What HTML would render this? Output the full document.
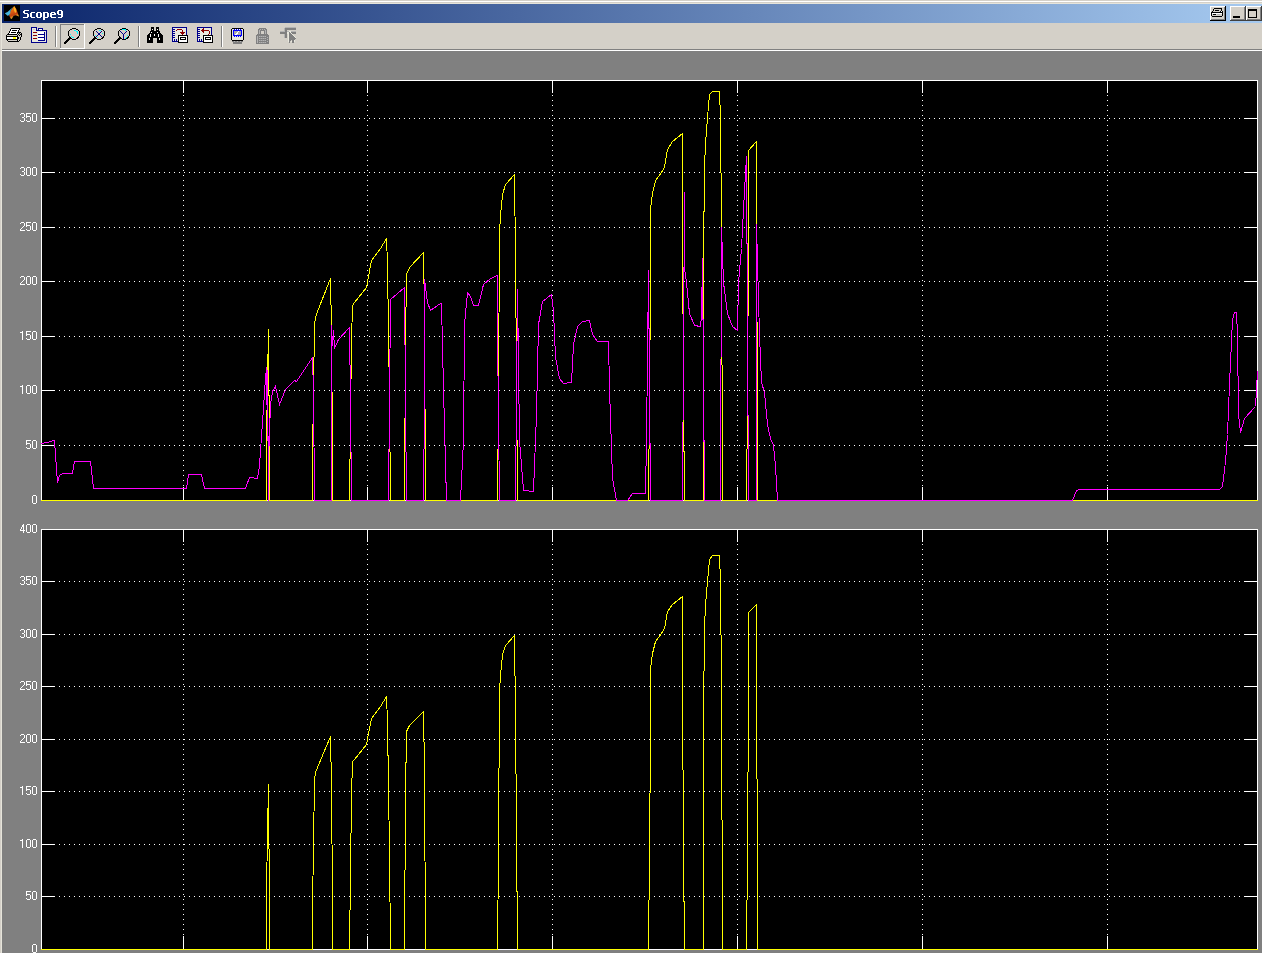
<!DOCTYPE html>
<html><head><meta charset="utf-8"><style>
html,body{margin:0;padding:0;}
body{width:1262px;height:953px;overflow:hidden;background:#d4d0c8;position:relative;font-family:"Liberation Sans",sans-serif;}
svg{position:absolute;left:0;top:0;}
.lb{font-size:12px;fill:#fff;text-anchor:end;letter-spacing:-0.5px;font-family:"Liberation Sans",sans-serif;}
</style></head><body>
<svg width="1262" height="953" shape-rendering="crispEdges">
<rect x="0" y="1" width="1262" height="1" fill="#fff"/>
<rect x="1" y="3" width="1" height="950" fill="#e6e4da"/>
<rect x="1" y="3" width="1261" height="1" fill="#e6e4da"/>
<defs><linearGradient id="tg" x1="0" x2="1" y1="0" y2="0"><stop offset="0" stop-color="#0a246a"/><stop offset="1" stop-color="#a6caf0"/></linearGradient></defs>
<rect x="2" y="4" width="1260" height="19" fill="url(#tg)"/>
<rect x="4" y="5" width="16" height="16" fill="#000"/>
<g shape-rendering="auto"><defs><linearGradient id="lg" x1="0" y1="0" x2="0.3" y2="1"><stop offset="0" stop-color="#ffb020"/><stop offset="0.45" stop-color="#e06010"/><stop offset="0.75" stop-color="#c04010"/><stop offset="1" stop-color="#ffd030"/></linearGradient></defs><path d="M14.3 6 L16.5 9.5 L17.8 13.3 L19 16.5 L15.8 15.2 L13.6 15.8 L12 18.4 L11 19 L9.2 15.8 L9.5 12.7 L10.8 10.5 L13.3 7 Z" fill="url(#lg)"/><path d="M14.3 6.2 L15.8 9 L16.3 12 L15 13 L14 10 Z" fill="#ffcc30" opacity="0.8"/><path d="M4.8 13.3 L7.5 12 L9.2 10.5 L13 7.2 L10.5 10.8 L10.2 13.5 L9 15.2 L7.5 15.8 Z" fill="#48b4dc"/></g>
<path fill="#fff" d="M24 10h5v1h-5zM23 11h2v1h-2zM23 12h2v1h-2zM24 13h4v1h-4zM27 14h2v1h-2zM27 15h2v1h-2zM27 16h2v1h-2zM23 17h5v1h-5zM31 12h4v1h-4zM30 13h2v1h-2zM30 14h2v1h-2zM30 15h2v1h-2zM30 16h2v1h-2zM31 17h4v1h-4zM37 12h4v1h-4zM36 13h2v1h-2zM40 13h2v1h-2zM36 14h2v1h-2zM40 14h2v1h-2zM36 15h2v1h-2zM40 15h2v1h-2zM36 16h2v1h-2zM40 16h2v1h-2zM37 17h4v1h-4zM43 12h5v1h-5zM43 13h2v1h-2zM47 13h2v1h-2zM43 14h2v1h-2zM47 14h2v1h-2zM43 15h2v1h-2zM47 15h2v1h-2zM43 16h2v1h-2zM47 16h2v1h-2zM43 17h5v1h-5zM43 18h2v1h-2zM43 19h2v1h-2zM51 12h4v1h-4zM50 13h2v1h-2zM54 13h2v1h-2zM50 14h6v1h-6zM50 15h2v1h-2zM50 16h2v1h-2zM51 17h5v1h-5zM58 10h4v1h-4zM57 11h2v1h-2zM61 11h2v1h-2zM57 12h2v1h-2zM61 12h2v1h-2zM57 13h2v1h-2zM61 13h2v1h-2zM58 14h5v1h-5zM61 15h2v1h-2zM61 16h2v1h-2zM58 17h4v1h-4z"/>
<rect x="1210" y="6" width="16" height="15" fill="#d4d0c8"/><rect x="1210" y="6" width="15" height="1" fill="#fff"/><rect x="1210" y="6" width="1" height="14" fill="#fff"/><rect x="1210" y="20" width="16" height="1" fill="#000"/><rect x="1225" y="6" width="1" height="15" fill="#000"/><rect x="1211" y="19" width="14" height="1" fill="#808080"/><rect x="1224" y="7" width="1" height="13" fill="#808080"/>
<path fill="#000" d="M1214 8h8v1h-8zM1213 9h1v1h-1zM1221 9h1v1h-1zM1213 10h1v1h-1zM1215 10h4v1h-4zM1221 10h1v1h-1zM1212 11h1v1h-1zM1220 11h1v1h-1zM1222 11h1v1h-1zM1211 12h12v1h-12zM1211 13h1v1h-1zM1222 13h1v1h-1zM1211 14h1v1h-1zM1213 14h3v1h-3zM1222 14h1v1h-1zM1211 15h1v1h-1zM1222 15h1v1h-1zM1212 16h10v1h-10z"/><path fill="#d4d0c8" d="M1214 9h7v1h-7zM1214 10h1v1h-1zM1219 10h2v1h-2zM1213 11h7v1h-7zM1212 14h1v1h-1zM1216 14h1v1h-1zM1220 14h2v1h-2zM1212 15h10v1h-10z"/><path fill="#fff" d="M1221 11h1v1h-1zM1212 13h10v1h-10z"/><path fill="#b4b4b4" d="M1217 14h3v1h-3z"/>
<rect x="1230" y="6" width="16" height="15" fill="#d4d0c8"/><rect x="1230" y="6" width="15" height="1" fill="#fff"/><rect x="1230" y="6" width="1" height="14" fill="#fff"/><rect x="1230" y="20" width="16" height="1" fill="#404040"/><rect x="1245" y="6" width="1" height="15" fill="#404040"/><rect x="1231" y="19" width="14" height="1" fill="#808080"/><rect x="1244" y="7" width="1" height="13" fill="#808080"/>
<rect x="1233" y="16" width="7" height="2" fill="#000"/>
<rect x="1246" y="6" width="16" height="15" fill="#d4d0c8"/><rect x="1246" y="6" width="15" height="1" fill="#fff"/><rect x="1246" y="6" width="1" height="14" fill="#fff"/><rect x="1246" y="20" width="16" height="1" fill="#404040"/><rect x="1261" y="6" width="1" height="15" fill="#404040"/><rect x="1247" y="19" width="14" height="1" fill="#808080"/><rect x="1260" y="7" width="1" height="13" fill="#808080"/>
<rect x="1248" y="9" width="9" height="9" fill="#000"/><rect x="1249" y="11" width="7" height="6" fill="#d4d0c8"/>
<rect x="2" y="49" width="1260" height="1" fill="#808080"/>
<rect x="2" y="50" width="1260" height="1" fill="#fff"/>
<rect x="55" y="26" width="1" height="21" fill="#808080"/><rect x="56" y="26" width="1" height="21" fill="#fff"/>
<rect x="138" y="26" width="1" height="21" fill="#808080"/><rect x="139" y="26" width="1" height="21" fill="#fff"/>
<rect x="221" y="26" width="1" height="21" fill="#808080"/><rect x="222" y="26" width="1" height="21" fill="#fff"/>
<rect x="60" y="24" width="25" height="1" fill="#808080"/><rect x="60" y="24" width="1" height="24" fill="#808080"/><rect x="60" y="48" width="25" height="1" fill="#fff"/><rect x="84" y="24" width="1" height="25" fill="#fff"/>
<path fill="#000" d="M11 28h9v1h-9zM10 29h1v1h-1zM19 29h1v1h-1zM10 30h1v1h-1zM12 30h5v1h-5zM18 30h1v1h-1zM9 31h1v1h-1zM18 31h1v1h-1zM9 32h1v1h-1zM11 32h5v1h-5zM17 32h4v1h-4zM8 33h1v1h-1zM17 33h1v1h-1zM19 33h1v1h-1zM21 33h1v1h-1zM7 34h10v1h-10zM18 34h1v1h-1zM20 34h2v1h-2zM6 35h1v1h-1zM17 35h1v1h-1zM19 35h1v1h-1zM21 35h1v1h-1zM6 36h12v1h-12zM21 36h1v1h-1zM6 37h1v1h-1zM17 37h2v1h-2zM20 37h1v1h-1zM6 38h1v1h-1zM17 38h2v1h-2zM20 38h1v1h-1zM6 39h12v1h-12zM20 39h1v1h-1zM7 40h1v1h-1zM17 40h1v1h-1zM19 40h1v1h-1zM8 41h11v1h-11z"/><path fill="#fff" d="M11 29h8v1h-8zM11 30h1v1h-1zM17 30h1v1h-1zM10 31h8v1h-8zM10 32h1v1h-1zM16 32h1v1h-1zM9 33h8v1h-8zM7 37h6v1h-6zM16 37h1v1h-1zM7 38h6v1h-6zM16 38h1v1h-1z"/><path fill="#d4d0c8" d="M18 33h1v1h-1zM20 33h1v1h-1zM17 34h1v1h-1zM19 34h1v1h-1zM7 35h10v1h-10zM18 35h1v1h-1zM20 35h1v1h-1zM18 36h3v1h-3zM19 37h1v1h-1zM19 38h1v1h-1zM18 39h2v1h-2zM8 40h9v1h-9zM18 40h1v1h-1z"/><path fill="#ffff00" d="M13 37h3v1h-3zM13 38h3v1h-3z"/><path fill="#00008b" d="M31 27h6v1h-6zM31 28h1v1h-1zM36 28h1v1h-1zM38 28h5v1h-5zM31 29h1v1h-1zM36 29h1v1h-1zM38 29h1v1h-1zM42 29h1v1h-1zM31 30h1v1h-1zM36 30h11v1h-11zM31 31h1v1h-1zM46 31h1v1h-1zM31 32h1v1h-1zM44 32h1v1h-1zM46 32h1v1h-1zM31 33h1v1h-1zM44 33h1v1h-1zM46 33h1v1h-1zM31 34h1v1h-1zM38 34h7v1h-7zM46 34h1v1h-1zM31 35h1v1h-1zM44 35h1v1h-1zM46 35h1v1h-1zM31 36h1v1h-1zM44 36h1v1h-1zM46 36h1v1h-1zM31 37h1v1h-1zM38 37h7v1h-7zM46 37h1v1h-1zM31 38h1v1h-1zM44 38h1v1h-1zM46 38h1v1h-1zM31 39h1v1h-1zM44 39h1v1h-1zM46 39h1v1h-1zM31 40h1v1h-1zM38 40h7v1h-7zM46 40h1v1h-1zM31 41h1v1h-1zM46 41h1v1h-1zM31 42h16v1h-16z"/><path fill="#e9e9df" d="M32 28h4v1h-4zM32 29h1v1h-1zM35 29h1v1h-1zM32 30h4v1h-4zM32 31h14v1h-14zM32 32h1v1h-1zM37 32h1v1h-1zM45 32h1v1h-1zM32 33h6v1h-6zM45 33h1v1h-1zM32 34h6v1h-6zM45 34h1v1h-1zM32 35h1v1h-1zM37 35h1v1h-1zM45 35h1v1h-1zM32 36h6v1h-6zM45 36h1v1h-1zM32 37h6v1h-6zM45 37h1v1h-1zM32 38h1v1h-1zM37 38h1v1h-1zM45 38h1v1h-1zM32 39h6v1h-6zM45 39h1v1h-1zM32 40h6v1h-6zM45 40h1v1h-1zM32 41h14v1h-14z"/><path fill="#d4d0c8" d="M33 29h2v1h-2z"/><path fill="#fff" d="M39 29h3v1h-3zM38 32h6v1h-6zM38 33h6v1h-6zM38 35h6v1h-6zM38 36h6v1h-6zM38 38h6v1h-6zM38 39h6v1h-6z"/><path fill="#8b0000" d="M33 32h4v1h-4zM33 35h4v1h-4zM33 38h4v1h-4z"/><path fill="#000" d="M72 28h4v1h-4zM70 29h2v1h-2zM76 29h2v1h-2zM69 30h1v1h-1zM78 30h1v1h-1zM68 31h1v1h-1zM79 31h1v1h-1zM68 32h1v1h-1zM79 32h1v1h-1zM68 33h1v1h-1zM79 33h1v1h-1zM68 34h1v1h-1zM79 34h1v1h-1zM68 35h1v1h-1zM79 35h1v1h-1zM69 36h1v1h-1zM78 36h1v1h-1zM69 37h2v1h-2zM77 37h2v1h-2zM68 38h4v1h-4zM76 38h2v1h-2zM67 39h3v1h-3zM72 39h4v1h-4zM66 40h3v1h-3zM65 41h3v1h-3zM64 42h3v1h-3zM64 43h2v1h-2z"/><path fill="#00ffff" d="M74 30h2v1h-2zM76 31h2v1h-2zM77 32h1v1h-1zM77 33h1v1h-1zM70 34h1v1h-1zM71 36h1v1h-1zM72 37h2v1h-2z"/><path fill="#000" d="M97 28h4v1h-4zM95 29h2v1h-2zM101 29h2v1h-2zM94 30h1v1h-1zM103 30h1v1h-1zM93 31h1v1h-1zM104 31h1v1h-1zM93 32h1v1h-1zM104 32h1v1h-1zM93 33h1v1h-1zM104 33h1v1h-1zM93 34h1v1h-1zM104 34h1v1h-1zM93 35h1v1h-1zM104 35h1v1h-1zM94 36h1v1h-1zM103 36h1v1h-1zM94 37h2v1h-2zM102 37h2v1h-2zM93 38h4v1h-4zM101 38h2v1h-2zM92 39h3v1h-3zM97 39h4v1h-4zM91 40h3v1h-3zM90 41h3v1h-3zM89 42h3v1h-3zM89 43h2v1h-2z"/><path fill="#00ffff" d="M99 30h2v1h-2zM102 33h1v1h-1zM95 35h1v1h-1zM97 37h1v1h-1z"/><path fill="#00008b" d="M96 31h1v1h-1zM101 31h1v1h-1zM97 32h1v1h-1zM100 32h1v1h-1zM98 33h2v1h-2zM98 34h2v1h-2zM97 35h1v1h-1zM100 35h1v1h-1zM96 36h1v1h-1zM101 36h1v1h-1z"/><path fill="#000" d="M122 28h4v1h-4zM120 29h2v1h-2zM126 29h2v1h-2zM119 30h1v1h-1zM128 30h1v1h-1zM118 31h1v1h-1zM129 31h1v1h-1zM118 32h1v1h-1zM129 32h1v1h-1zM118 33h1v1h-1zM129 33h1v1h-1zM118 34h1v1h-1zM129 34h1v1h-1zM118 35h1v1h-1zM129 35h1v1h-1zM119 36h1v1h-1zM128 36h1v1h-1zM119 37h2v1h-2zM127 37h2v1h-2zM118 38h4v1h-4zM126 38h2v1h-2zM117 39h3v1h-3zM122 39h4v1h-4zM116 40h3v1h-3zM115 41h3v1h-3zM114 42h3v1h-3zM114 43h2v1h-2z"/><path fill="#00ffff" d="M122 29h4v1h-4zM125 30h1v1h-1zM127 35h1v1h-1zM126 37h1v1h-1zM125 38h1v1h-1z"/><path fill="#00008b" d="M120 31h1v1h-1zM126 31h1v1h-1zM121 32h1v1h-1zM125 32h1v1h-1zM122 33h1v1h-1zM124 33h1v1h-1zM123 34h1v1h-1zM123 35h1v1h-1zM123 36h1v1h-1zM123 37h1v1h-1zM123 38h1v1h-1z"/><path fill="#000" d="M151 27h3v1h-3zM156 27h3v1h-3zM151 28h3v1h-3zM156 28h3v1h-3zM151 29h1v1h-1zM153 29h1v1h-1zM156 29h1v1h-1zM158 29h1v1h-1zM151 30h3v1h-3zM156 30h3v1h-3zM150 31h10v1h-10zM150 32h1v1h-1zM152 32h5v1h-5zM158 32h2v1h-2zM149 33h12v1h-12zM148 34h2v1h-2zM151 34h3v1h-3zM155 34h3v1h-3zM159 34h3v1h-3zM147 35h3v1h-3zM151 35h3v1h-3zM155 35h3v1h-3zM159 35h4v1h-4zM147 36h3v1h-3zM151 36h7v1h-7zM159 36h4v1h-4zM147 37h16v1h-16zM147 38h2v1h-2zM150 38h3v1h-3zM157 38h2v1h-2zM160 38h3v1h-3zM147 39h2v1h-2zM150 39h3v1h-3zM157 39h2v1h-2zM160 39h3v1h-3zM147 40h6v1h-6zM157 40h6v1h-6zM147 41h6v1h-6zM157 41h6v1h-6zM147 42h6v1h-6zM157 42h6v1h-6z"/><path fill="#fff" d="M152 29h1v1h-1zM157 29h1v1h-1zM151 32h1v1h-1zM157 32h1v1h-1zM150 34h1v1h-1zM154 34h1v1h-1zM158 34h1v1h-1zM150 35h1v1h-1zM154 35h1v1h-1zM158 35h1v1h-1zM150 36h1v1h-1zM158 36h1v1h-1zM149 38h1v1h-1zM159 38h1v1h-1zM149 39h1v1h-1zM159 39h1v1h-1z"/><path fill="#00008b" d="M172 27h15v1h-15zM172 28h1v1h-1zM186 28h1v1h-1zM172 29h3v1h-3zM186 29h1v1h-1zM172 30h1v1h-1zM186 30h1v1h-1zM172 31h3v1h-3zM186 31h1v1h-1zM172 32h1v1h-1zM186 32h1v1h-1zM172 33h3v1h-3zM186 33h1v1h-1zM172 34h1v1h-1zM186 34h1v1h-1zM172 35h3v1h-3zM172 36h1v1h-1zM172 37h3v1h-3zM172 38h1v1h-1zM172 39h1v1h-1zM174 39h1v1h-1zM176 39h1v1h-1zM172 40h1v1h-1zM174 40h1v1h-1zM176 40h1v1h-1zM172 41h6v1h-6z"/><path fill="#e9e9df" d="M173 28h13v1h-13zM175 29h2v1h-2zM182 29h4v1h-4zM173 30h3v1h-3zM177 30h5v1h-5zM183 30h3v1h-3zM175 31h7v1h-7zM183 31h3v1h-3zM173 32h7v1h-7zM185 32h1v1h-1zM175 33h6v1h-6zM184 33h2v1h-2zM173 34h9v1h-9zM183 34h3v1h-3zM175 35h3v1h-3zM173 36h5v1h-5zM175 37h3v1h-3zM173 38h5v1h-5zM173 39h1v1h-1zM175 39h1v1h-1zM177 39h1v1h-1zM173 40h1v1h-1zM175 40h1v1h-1zM177 40h1v1h-1z"/><path fill="#8b0000" d="M177 29h5v1h-5zM176 30h1v1h-1zM182 30h1v1h-1zM182 31h1v1h-1zM180 32h5v1h-5zM181 33h3v1h-3zM182 34h1v1h-1z"/><path fill="#000" d="M178 35h10v1h-10zM178 36h1v1h-1zM187 36h1v1h-1zM178 37h1v1h-1zM180 37h6v1h-6zM187 37h1v1h-1zM178 38h1v1h-1zM180 38h1v1h-1zM185 38h1v1h-1zM187 38h1v1h-1zM178 39h1v1h-1zM180 39h6v1h-6zM187 39h1v1h-1zM178 40h1v1h-1zM187 40h1v1h-1zM178 41h1v1h-1zM187 41h1v1h-1zM178 42h10v1h-10z"/><path fill="#fff" d="M179 36h8v1h-8zM179 37h1v1h-1zM186 37h1v1h-1zM179 38h1v1h-1zM181 38h4v1h-4zM186 38h1v1h-1zM179 39h1v1h-1zM186 39h1v1h-1zM179 40h8v1h-8zM179 41h8v1h-8z"/><path fill="#00008b" d="M197 27h15v1h-15zM197 28h1v1h-1zM211 28h1v1h-1zM197 29h3v1h-3zM211 29h1v1h-1zM197 30h1v1h-1zM211 30h1v1h-1zM197 31h3v1h-3zM211 31h1v1h-1zM197 32h1v1h-1zM211 32h1v1h-1zM197 33h3v1h-3zM211 33h1v1h-1zM197 34h1v1h-1zM211 34h1v1h-1zM197 35h3v1h-3zM197 36h1v1h-1zM197 37h3v1h-3zM197 38h1v1h-1zM197 39h1v1h-1zM199 39h1v1h-1zM201 39h1v1h-1zM197 40h1v1h-1zM199 40h1v1h-1zM201 40h1v1h-1zM197 41h6v1h-6z"/><path fill="#e9e9df" d="M198 28h5v1h-5zM204 28h7v1h-7zM200 29h2v1h-2zM204 29h7v1h-7zM198 30h3v1h-3zM209 30h2v1h-2zM200 31h2v1h-2zM204 31h5v1h-5zM210 31h1v1h-1zM198 32h5v1h-5zM204 32h5v1h-5zM210 32h1v1h-1zM200 33h9v1h-9zM210 33h1v1h-1zM198 34h10v1h-10zM209 34h2v1h-2zM200 35h3v1h-3zM198 36h5v1h-5zM200 37h3v1h-3zM198 38h5v1h-5zM198 39h1v1h-1zM200 39h1v1h-1zM202 39h1v1h-1zM198 40h1v1h-1zM200 40h1v1h-1zM202 40h1v1h-1z"/><path fill="#8b0000" d="M203 28h1v1h-1zM202 29h2v1h-2zM201 30h8v1h-8zM202 31h2v1h-2zM209 31h1v1h-1zM203 32h1v1h-1zM209 32h1v1h-1zM209 33h1v1h-1zM208 34h1v1h-1z"/><path fill="#000" d="M203 35h10v1h-10zM203 36h1v1h-1zM212 36h1v1h-1zM203 37h1v1h-1zM205 37h6v1h-6zM212 37h1v1h-1zM203 38h1v1h-1zM205 38h1v1h-1zM210 38h1v1h-1zM212 38h1v1h-1zM203 39h1v1h-1zM205 39h6v1h-6zM212 39h1v1h-1zM203 40h1v1h-1zM212 40h1v1h-1zM203 41h1v1h-1zM212 41h1v1h-1zM203 42h10v1h-10z"/><path fill="#fff" d="M204 36h8v1h-8zM204 37h1v1h-1zM211 37h1v1h-1zM204 38h1v1h-1zM206 38h4v1h-4zM211 38h1v1h-1zM204 39h1v1h-1zM211 39h1v1h-1zM204 40h8v1h-8zM204 41h8v1h-8z"/><path fill="#000" d="M232 28h11v1h-11zM231 29h1v1h-1zM243 29h1v1h-1zM231 30h1v1h-1zM243 30h1v1h-1zM231 31h1v1h-1zM243 31h1v1h-1zM231 32h1v1h-1zM243 32h1v1h-1zM231 33h1v1h-1zM243 33h1v1h-1zM231 34h1v1h-1zM243 34h1v1h-1zM231 35h1v1h-1zM243 35h1v1h-1zM231 36h1v1h-1zM243 36h1v1h-1zM231 37h1v1h-1zM243 37h1v1h-1zM231 38h1v1h-1zM243 38h1v1h-1zM231 39h1v1h-1zM243 39h1v1h-1zM232 40h11v1h-11z"/><path fill="#e9e9df" d="M232 29h2v1h-2zM241 29h2v1h-2zM232 30h1v1h-1zM242 30h1v1h-1zM232 31h1v1h-1zM242 31h1v1h-1zM232 32h1v1h-1zM242 32h1v1h-1zM232 33h1v1h-1zM242 33h1v1h-1zM232 34h1v1h-1zM242 34h1v1h-1zM232 35h1v1h-1zM242 35h1v1h-1zM232 36h2v1h-2zM235 36h1v1h-1zM237 36h1v1h-1zM239 36h1v1h-1zM241 36h2v1h-2zM232 37h11v1h-11zM232 38h11v1h-11zM232 39h11v1h-11z"/><path fill="#0000ff" d="M234 29h1v1h-1zM236 29h1v1h-1zM238 29h1v1h-1zM240 29h1v1h-1zM233 30h9v1h-9zM233 31h1v1h-1zM241 31h1v1h-1zM233 32h1v1h-1zM241 32h1v1h-1zM233 33h1v1h-1zM241 33h1v1h-1zM233 34h1v1h-1zM241 34h1v1h-1zM233 35h9v1h-9zM234 36h1v1h-1zM236 36h1v1h-1zM238 36h1v1h-1zM240 36h1v1h-1z"/><path fill="#fff" d="M235 29h1v1h-1zM237 29h1v1h-1zM239 29h1v1h-1zM238 31h1v1h-1zM237 32h1v1h-1zM236 33h2v1h-2zM235 34h2v1h-2z"/><path fill="#a8a8a8" d="M234 31h4v1h-4zM239 31h2v1h-2zM234 32h3v1h-3zM238 32h3v1h-3zM234 33h2v1h-2zM238 33h3v1h-3zM234 34h1v1h-1zM237 34h4v1h-4z"/><path fill="#808080" d="M232 41h2v1h-2zM235 41h2v1h-2zM238 41h2v1h-2zM241 41h2v1h-2zM233 42h9v1h-9zM233 43h9v1h-9z"/><path fill="#b4b4b4" d="M234 41h1v1h-1zM237 41h1v1h-1zM240 41h1v1h-1z"/><path fill="#808080" d="M259 28h7v1h-7zM258 29h2v1h-2zM261 29h1v1h-1zM263 29h1v1h-1zM265 29h2v1h-2zM258 30h1v1h-1zM260 30h5v1h-5zM266 30h1v1h-1zM258 31h1v1h-1zM260 31h1v1h-1zM264 31h1v1h-1zM266 31h1v1h-1zM258 32h1v1h-1zM260 32h1v1h-1zM264 32h1v1h-1zM266 32h1v1h-1zM258 33h1v1h-1zM260 33h1v1h-1zM264 33h1v1h-1zM266 33h1v1h-1zM257 34h11v1h-11zM256 35h13v1h-13zM256 36h1v1h-1zM258 36h1v1h-1zM266 36h3v1h-3zM256 37h1v1h-1zM258 37h9v1h-9zM268 37h1v1h-1zM256 38h1v1h-1zM258 38h1v1h-1zM266 38h3v1h-3zM256 39h1v1h-1zM258 39h9v1h-9zM268 39h1v1h-1zM256 40h1v1h-1zM258 40h1v1h-1zM266 40h3v1h-3zM256 41h1v1h-1zM258 41h9v1h-9zM268 41h1v1h-1zM256 42h1v1h-1zM258 42h1v1h-1zM266 42h3v1h-3zM256 43h13v1h-13z"/><path fill="#b4b4b4" d="M260 29h1v1h-1zM262 29h1v1h-1zM264 29h1v1h-1zM259 30h1v1h-1zM265 30h1v1h-1zM259 31h1v1h-1zM265 31h1v1h-1zM259 32h1v1h-1zM265 32h1v1h-1zM259 33h1v1h-1zM265 33h1v1h-1zM257 36h1v1h-1zM259 36h1v1h-1zM261 36h1v1h-1zM263 36h1v1h-1zM265 36h1v1h-1zM257 37h1v1h-1zM267 37h1v1h-1zM257 38h1v1h-1zM259 38h1v1h-1zM261 38h1v1h-1zM263 38h1v1h-1zM265 38h1v1h-1zM257 39h1v1h-1zM267 39h1v1h-1zM257 40h1v1h-1zM259 40h1v1h-1zM261 40h1v1h-1zM263 40h1v1h-1zM265 40h1v1h-1zM257 41h1v1h-1zM267 41h1v1h-1zM257 42h1v1h-1zM259 42h1v1h-1zM261 42h1v1h-1zM263 42h1v1h-1zM265 42h1v1h-1z"/><path fill="#d4d0c8" d="M261 31h3v1h-3zM261 32h3v1h-3zM261 33h3v1h-3z"/><path fill="#9c9c9c" d="M260 36h1v1h-1zM262 36h1v1h-1zM264 36h1v1h-1zM260 38h1v1h-1zM262 38h1v1h-1zM264 38h1v1h-1zM260 40h1v1h-1zM262 40h1v1h-1zM264 40h1v1h-1zM260 42h1v1h-1zM262 42h1v1h-1zM264 42h1v1h-1z"/><path fill="#b4b4b4" d="M285 27h11v1h-11zM284 28h1v1h-1zM284 29h1v1h-1zM284 30h1v1h-1zM280 31h5v1h-5zM287 31h2v1h-2zM291 31h5v1h-5zM284 34h1v1h-1zM284 35h1v1h-1zM284 36h1v1h-1zM284 37h1v1h-1z"/><path fill="#808080" d="M285 28h11v1h-11zM285 29h11v1h-11zM285 30h2v1h-2zM285 31h2v1h-2zM280 32h7v1h-7zM289 32h1v1h-1zM291 32h5v1h-5zM280 33h7v1h-7zM289 33h2v1h-2zM292 33h4v1h-4zM285 34h2v1h-2zM289 34h3v1h-3zM285 35h2v1h-2zM289 35h4v1h-4zM285 36h2v1h-2zM289 36h5v1h-5zM285 37h2v1h-2zM289 37h6v1h-6zM289 38h7v1h-7zM289 39h6v1h-6zM289 40h2v1h-2zM292 40h2v1h-2zM289 41h1v1h-1zM292 41h2v1h-2zM289 42h1v1h-1zM292 42h2v1h-2z"/><path fill="#e9e9df" d="M289 31h2v1h-2zM287 32h2v1h-2zM290 32h1v1h-1zM287 33h2v1h-2zM291 33h1v1h-1zM288 34h1v1h-1zM292 34h1v1h-1zM288 35h1v1h-1zM293 35h1v1h-1zM288 36h1v1h-1zM294 36h1v1h-1zM288 37h1v1h-1zM295 37h1v1h-1zM288 38h1v1h-1zM288 39h1v1h-1zM288 40h1v1h-1zM294 40h1v1h-1zM288 41h1v1h-1zM291 41h1v1h-1zM294 41h1v1h-1z"/>
<rect x="2" y="51" width="1260" height="902" fill="#808080"/>
<rect x="41" y="80" width="1217" height="421" fill="#000"/>
<path d="M59 118.5H1243 M59 172.5H1243 M59 227.5H1243 M59 281.5H1243 M59 336.5H1243 M59 390.5H1243 M59 445.5H1243 M183.5 95V487 M367.5 95V487 M552.5 95V487 M737.5 95V487 M922.5 95V487 M1107.5 95V487" stroke="#fff" stroke-width="1" stroke-dasharray="1 4" fill="none"/>
<path d="M42 118.5h13M1244 118.5h13 M42 172.5h13M1244 172.5h13 M42 227.5h13M1244 227.5h13 M42 281.5h13M1244 281.5h13 M42 336.5h13M1244 336.5h13 M42 390.5h13M1244 390.5h13 M42 445.5h13M1244 445.5h13 M42 500.5h13M1244 500.5h13 M183.5 81v12M183.5 500v-13 M367.5 81v12M367.5 500v-13 M552.5 81v12M552.5 500v-13 M737.5 81v12M737.5 500v-13 M922.5 81v12M922.5 500v-13 M1107.5 81v12M1107.5 500v-13" stroke="#fff" stroke-width="1" fill="none"/>
<rect x="41.5" y="80.5" width="1216" height="420" fill="none" stroke="#fff" stroke-width="1"/>
<polyline points="41.5,500.5 266.5,500.5 266.5,440.5 267.5,380.5 268.5,329.5 269.5,460.5 269.5,500.5 312.5,500.5 312.5,457.5 313.5,392.5 314.5,324.5 315.5,317.5 317.5,311.5 330.5,278.5 331.5,330.5 332.5,450.5 332.5,500.5 349.5,500.5 350.5,420.5 351.5,340.5 352.5,305.5 354.5,302.5 366.5,287.5 368.5,276.5 371.5,260.5 374.5,256.5 380.5,248.5 386.5,238.5 387.5,263.5 389.5,400.5 390.5,500.5 404.5,500.5 405.5,340.5 406.5,274.5 409.5,267.5 423.5,252.5 424.5,314.5 425.5,500.5 497.5,500.5 498.5,400.5 499.5,232.5 500.5,215.5 502.5,194.5 505.5,184.5 514.5,174.5 515.5,255.5 517.5,500.5 648.5,500.5 649.5,400.5 650.5,280.5 650.5,209.5 652.5,193.5 655.5,180.5 661.5,172.5 664.5,167.5 667.5,149.5 672.5,141.5 682.5,133.5 682.5,224.5 683.5,400.5 684.5,500.5 703.5,500.5 703.5,258.5 704.5,166.5 705.5,143.5 707.5,117.5 709.5,94.5 712.5,91.5 719.5,91.5 720.5,117.5 721.5,226.5 722.5,500.5 746.5,500.5 747.5,400.5 748.5,237.5 748.5,150.5 756.5,141.5 757.5,500.5 1257.5,500.5" stroke="#ff0" fill="none" stroke-linecap="square"/>
<polyline points="41.5,443.5 47.5,442.5 53.5,440.5 54.5,440.5 57.5,482.5 59.5,475.5 62.5,473.5 72.5,473.5 74.5,461.5 90.5,461.5 93.5,488.5 186.5,488.5 188.5,474.5 201.5,474.5 204.5,488.5 245.5,488.5 249.5,477.5 257.5,478.5 259.5,465.5 261.5,436.5 263.5,408.5 264.5,391.5 266.5,367.5 267.5,440.5 267.5,370.5 268.5,500.5 268.5,460.5 270.5,404.5 272.5,391.5 275.5,386.5 279.5,404.5 285.5,389.5 294.5,380.5 296.5,381.5 312.5,357.5 313.5,391.5 314.5,500.5 331.5,500.5 331.5,325.5 332.5,345.5 333.5,330.5 334.5,348.5 338.5,339.5 349.5,327.5 350.5,400.5 351.5,500.5 388.5,500.5 389.5,400.5 390.5,299.5 404.5,287.5 405.5,400.5 406.5,500.5 423.5,500.5 424.5,400.5 424.5,279.5 427.5,302.5 430.5,310.5 440.5,303.5 441.5,303.5 443.5,388.5 446.5,500.5 460.5,500.5 463.5,440.5 464.5,324.5 467.5,292.5 470.5,296.5 473.5,305.5 478.5,305.5 483.5,284.5 490.5,278.5 497.5,275.5 497.5,332.5 499.5,500.5 515.5,500.5 517.5,289.5 519.5,440.5 523.5,490.5 533.5,491.5 536.5,414.5 538.5,324.5 542.5,301.5 551.5,294.5 553.5,311.5 555.5,357.5 559.5,378.5 563.5,383.5 571.5,382.5 573.5,344.5 577.5,326.5 582.5,321.5 589.5,320.5 592.5,334.5 597.5,341.5 608.5,341.5 609.5,388.5 612.5,478.5 616.5,500.5 627.5,500.5 632.5,493.5 645.5,493.5 646.5,440.5 648.5,270.5 650.5,500.5 682.5,500.5 684.5,192.5 684.5,268.5 686.5,282.5 689.5,313.5 694.5,325.5 700.5,326.5 701.5,316.5 702.5,258.5 704.5,500.5 720.5,500.5 721.5,227.5 723.5,282.5 727.5,313.5 732.5,326.5 737.5,330.5 738.5,282.5 741.5,248.5 744.5,190.5 746.5,156.5 748.5,500.5 756.5,500.5 756.5,224.5 758.5,299.5 759.5,334.5 761.5,382.5 764.5,392.5 767.5,424.5 770.5,438.5 773.5,445.5 775.5,466.5 777.5,500.5 1072.5,500.5 1076.5,490.5 1079.5,489.5 1219.5,489.5 1222.5,486.5 1225.5,461.5 1227.5,434.5 1229.5,384.5 1232.5,319.5 1234.5,312.5 1236.5,312.5 1237.5,335.5 1238.5,414.5 1240.5,432.5 1244.5,418.5 1255.5,406.5 1256.5,389.5 1257.5,371.5" stroke="#f0f" fill="none" stroke-linecap="square"/>
<path fill="#fff" d="M21 113h3v1h-3zM20 114h1v1h-1zM24 114h1v1h-1zM24 115h1v1h-1zM24 116h1v1h-1zM22 117h2v1h-2zM24 118h1v1h-1zM24 119h1v1h-1zM20 120h1v1h-1zM24 120h1v1h-1zM21 121h3v1h-3zM26 113h5v1h-5zM26 114h1v1h-1zM26 115h1v1h-1zM26 116h4v1h-4zM26 117h1v1h-1zM30 117h1v1h-1zM30 118h1v1h-1zM30 119h1v1h-1zM26 120h1v1h-1zM30 120h1v1h-1zM27 121h3v1h-3zM33 113h3v1h-3zM32 114h1v1h-1zM36 114h1v1h-1zM32 115h1v1h-1zM36 115h1v1h-1zM32 116h1v1h-1zM36 116h1v1h-1zM32 117h1v1h-1zM36 117h1v1h-1zM32 118h1v1h-1zM36 118h1v1h-1zM32 119h1v1h-1zM36 119h1v1h-1zM32 120h1v1h-1zM36 120h1v1h-1zM33 121h3v1h-3zM21 167h3v1h-3zM20 168h1v1h-1zM24 168h1v1h-1zM24 169h1v1h-1zM24 170h1v1h-1zM22 171h2v1h-2zM24 172h1v1h-1zM24 173h1v1h-1zM20 174h1v1h-1zM24 174h1v1h-1zM21 175h3v1h-3zM27 167h3v1h-3zM26 168h1v1h-1zM30 168h1v1h-1zM26 169h1v1h-1zM30 169h1v1h-1zM26 170h1v1h-1zM30 170h1v1h-1zM26 171h1v1h-1zM30 171h1v1h-1zM26 172h1v1h-1zM30 172h1v1h-1zM26 173h1v1h-1zM30 173h1v1h-1zM26 174h1v1h-1zM30 174h1v1h-1zM27 175h3v1h-3zM33 167h3v1h-3zM32 168h1v1h-1zM36 168h1v1h-1zM32 169h1v1h-1zM36 169h1v1h-1zM32 170h1v1h-1zM36 170h1v1h-1zM32 171h1v1h-1zM36 171h1v1h-1zM32 172h1v1h-1zM36 172h1v1h-1zM32 173h1v1h-1zM36 173h1v1h-1zM32 174h1v1h-1zM36 174h1v1h-1zM33 175h3v1h-3zM21 222h3v1h-3zM20 223h1v1h-1zM24 223h1v1h-1zM24 224h1v1h-1zM24 225h1v1h-1zM23 226h1v1h-1zM22 227h1v1h-1zM21 228h1v1h-1zM20 229h1v1h-1zM20 230h5v1h-5zM26 222h5v1h-5zM26 223h1v1h-1zM26 224h1v1h-1zM26 225h4v1h-4zM26 226h1v1h-1zM30 226h1v1h-1zM30 227h1v1h-1zM30 228h1v1h-1zM26 229h1v1h-1zM30 229h1v1h-1zM27 230h3v1h-3zM33 222h3v1h-3zM32 223h1v1h-1zM36 223h1v1h-1zM32 224h1v1h-1zM36 224h1v1h-1zM32 225h1v1h-1zM36 225h1v1h-1zM32 226h1v1h-1zM36 226h1v1h-1zM32 227h1v1h-1zM36 227h1v1h-1zM32 228h1v1h-1zM36 228h1v1h-1zM32 229h1v1h-1zM36 229h1v1h-1zM33 230h3v1h-3zM21 276h3v1h-3zM20 277h1v1h-1zM24 277h1v1h-1zM24 278h1v1h-1zM24 279h1v1h-1zM23 280h1v1h-1zM22 281h1v1h-1zM21 282h1v1h-1zM20 283h1v1h-1zM20 284h5v1h-5zM27 276h3v1h-3zM26 277h1v1h-1zM30 277h1v1h-1zM26 278h1v1h-1zM30 278h1v1h-1zM26 279h1v1h-1zM30 279h1v1h-1zM26 280h1v1h-1zM30 280h1v1h-1zM26 281h1v1h-1zM30 281h1v1h-1zM26 282h1v1h-1zM30 282h1v1h-1zM26 283h1v1h-1zM30 283h1v1h-1zM27 284h3v1h-3zM33 276h3v1h-3zM32 277h1v1h-1zM36 277h1v1h-1zM32 278h1v1h-1zM36 278h1v1h-1zM32 279h1v1h-1zM36 279h1v1h-1zM32 280h1v1h-1zM36 280h1v1h-1zM32 281h1v1h-1zM36 281h1v1h-1zM32 282h1v1h-1zM36 282h1v1h-1zM32 283h1v1h-1zM36 283h1v1h-1zM33 284h3v1h-3zM22 331h1v1h-1zM20 332h3v1h-3zM22 333h1v1h-1zM22 334h1v1h-1zM22 335h1v1h-1zM22 336h1v1h-1zM22 337h1v1h-1zM22 338h1v1h-1zM22 339h1v1h-1zM26 331h5v1h-5zM26 332h1v1h-1zM26 333h1v1h-1zM26 334h4v1h-4zM26 335h1v1h-1zM30 335h1v1h-1zM30 336h1v1h-1zM30 337h1v1h-1zM26 338h1v1h-1zM30 338h1v1h-1zM27 339h3v1h-3zM33 331h3v1h-3zM32 332h1v1h-1zM36 332h1v1h-1zM32 333h1v1h-1zM36 333h1v1h-1zM32 334h1v1h-1zM36 334h1v1h-1zM32 335h1v1h-1zM36 335h1v1h-1zM32 336h1v1h-1zM36 336h1v1h-1zM32 337h1v1h-1zM36 337h1v1h-1zM32 338h1v1h-1zM36 338h1v1h-1zM33 339h3v1h-3zM22 385h1v1h-1zM20 386h3v1h-3zM22 387h1v1h-1zM22 388h1v1h-1zM22 389h1v1h-1zM22 390h1v1h-1zM22 391h1v1h-1zM22 392h1v1h-1zM22 393h1v1h-1zM27 385h3v1h-3zM26 386h1v1h-1zM30 386h1v1h-1zM26 387h1v1h-1zM30 387h1v1h-1zM26 388h1v1h-1zM30 388h1v1h-1zM26 389h1v1h-1zM30 389h1v1h-1zM26 390h1v1h-1zM30 390h1v1h-1zM26 391h1v1h-1zM30 391h1v1h-1zM26 392h1v1h-1zM30 392h1v1h-1zM27 393h3v1h-3zM33 385h3v1h-3zM32 386h1v1h-1zM36 386h1v1h-1zM32 387h1v1h-1zM36 387h1v1h-1zM32 388h1v1h-1zM36 388h1v1h-1zM32 389h1v1h-1zM36 389h1v1h-1zM32 390h1v1h-1zM36 390h1v1h-1zM32 391h1v1h-1zM36 391h1v1h-1zM32 392h1v1h-1zM36 392h1v1h-1zM33 393h3v1h-3zM26 440h5v1h-5zM26 441h1v1h-1zM26 442h1v1h-1zM26 443h4v1h-4zM26 444h1v1h-1zM30 444h1v1h-1zM30 445h1v1h-1zM30 446h1v1h-1zM26 447h1v1h-1zM30 447h1v1h-1zM27 448h3v1h-3zM33 440h3v1h-3zM32 441h1v1h-1zM36 441h1v1h-1zM32 442h1v1h-1zM36 442h1v1h-1zM32 443h1v1h-1zM36 443h1v1h-1zM32 444h1v1h-1zM36 444h1v1h-1zM32 445h1v1h-1zM36 445h1v1h-1zM32 446h1v1h-1zM36 446h1v1h-1zM32 447h1v1h-1zM36 447h1v1h-1zM33 448h3v1h-3zM33 495h3v1h-3zM32 496h1v1h-1zM36 496h1v1h-1zM32 497h1v1h-1zM36 497h1v1h-1zM32 498h1v1h-1zM36 498h1v1h-1zM32 499h1v1h-1zM36 499h1v1h-1zM32 500h1v1h-1zM36 500h1v1h-1zM32 501h1v1h-1zM36 501h1v1h-1zM32 502h1v1h-1zM36 502h1v1h-1zM33 503h3v1h-3z"/>
<rect x="41" y="529" width="1217" height="421" fill="#000"/>
<path d="M59 581.5H1243 M59 634.5H1243 M59 686.5H1243 M59 739.5H1243 M59 791.5H1243 M59 844.5H1243 M59 896.5H1243 M183.5 544V936 M367.5 544V936 M552.5 544V936 M737.5 544V936 M922.5 544V936 M1107.5 544V936" stroke="#fff" stroke-width="1" stroke-dasharray="1 4" fill="none"/>
<path d="M42 529.5h13M1244 529.5h13 M42 581.5h13M1244 581.5h13 M42 634.5h13M1244 634.5h13 M42 686.5h13M1244 686.5h13 M42 739.5h13M1244 739.5h13 M42 791.5h13M1244 791.5h13 M42 844.5h13M1244 844.5h13 M42 896.5h13M1244 896.5h13 M42 949.5h13M1244 949.5h13 M183.5 530v12M183.5 949v-13 M367.5 530v12M367.5 949v-13 M552.5 530v12M552.5 949v-13 M737.5 530v12M737.5 949v-13 M922.5 530v12M922.5 949v-13 M1107.5 530v12M1107.5 949v-13" stroke="#fff" stroke-width="1" fill="none"/>
<rect x="41.5" y="529.5" width="1216" height="420" fill="none" stroke="#fff" stroke-width="1"/>
<polyline points="41.5,949.5 266.5,949.5 266.5,891.5 267.5,833.5 268.5,784.5 269.5,910.5 269.5,949.5 312.5,949.5 312.5,907.5 313.5,845.5 314.5,779.5 315.5,772.5 317.5,767.5 330.5,736.5 331.5,785.5 332.5,900.5 332.5,949.5 349.5,949.5 350.5,872.5 351.5,795.5 352.5,761.5 354.5,759.5 366.5,744.5 368.5,733.5 371.5,718.5 374.5,714.5 380.5,706.5 386.5,696.5 387.5,721.5 389.5,852.5 390.5,949.5 404.5,949.5 405.5,795.5 406.5,731.5 409.5,725.5 423.5,711.5 424.5,770.5 425.5,949.5 497.5,949.5 498.5,852.5 499.5,691.5 500.5,675.5 502.5,654.5 505.5,645.5 514.5,635.5 515.5,713.5 517.5,949.5 648.5,949.5 649.5,852.5 650.5,737.5 650.5,669.5 652.5,653.5 655.5,641.5 661.5,633.5 664.5,628.5 667.5,611.5 672.5,604.5 682.5,596.5 682.5,684.5 683.5,852.5 684.5,949.5 703.5,949.5 703.5,716.5 704.5,627.5 705.5,605.5 707.5,581.5 709.5,559.5 712.5,555.5 719.5,555.5 720.5,581.5 721.5,686.5 722.5,949.5 746.5,949.5 747.5,852.5 748.5,696.5 748.5,612.5 756.5,604.5 757.5,949.5 1257.5,949.5" stroke="#ff0" fill="none" stroke-linecap="square"/>
<path fill="#fff" d="M23 524h1v1h-1zM22 525h2v1h-2zM22 526h2v1h-2zM21 527h1v1h-1zM23 527h1v1h-1zM21 528h1v1h-1zM23 528h1v1h-1zM20 529h1v1h-1zM23 529h1v1h-1zM20 530h5v1h-5zM23 531h1v1h-1zM23 532h1v1h-1zM27 524h3v1h-3zM26 525h1v1h-1zM30 525h1v1h-1zM26 526h1v1h-1zM30 526h1v1h-1zM26 527h1v1h-1zM30 527h1v1h-1zM26 528h1v1h-1zM30 528h1v1h-1zM26 529h1v1h-1zM30 529h1v1h-1zM26 530h1v1h-1zM30 530h1v1h-1zM26 531h1v1h-1zM30 531h1v1h-1zM27 532h3v1h-3zM33 524h3v1h-3zM32 525h1v1h-1zM36 525h1v1h-1zM32 526h1v1h-1zM36 526h1v1h-1zM32 527h1v1h-1zM36 527h1v1h-1zM32 528h1v1h-1zM36 528h1v1h-1zM32 529h1v1h-1zM36 529h1v1h-1zM32 530h1v1h-1zM36 530h1v1h-1zM32 531h1v1h-1zM36 531h1v1h-1zM33 532h3v1h-3zM21 576h3v1h-3zM20 577h1v1h-1zM24 577h1v1h-1zM24 578h1v1h-1zM24 579h1v1h-1zM22 580h2v1h-2zM24 581h1v1h-1zM24 582h1v1h-1zM20 583h1v1h-1zM24 583h1v1h-1zM21 584h3v1h-3zM26 576h5v1h-5zM26 577h1v1h-1zM26 578h1v1h-1zM26 579h4v1h-4zM26 580h1v1h-1zM30 580h1v1h-1zM30 581h1v1h-1zM30 582h1v1h-1zM26 583h1v1h-1zM30 583h1v1h-1zM27 584h3v1h-3zM33 576h3v1h-3zM32 577h1v1h-1zM36 577h1v1h-1zM32 578h1v1h-1zM36 578h1v1h-1zM32 579h1v1h-1zM36 579h1v1h-1zM32 580h1v1h-1zM36 580h1v1h-1zM32 581h1v1h-1zM36 581h1v1h-1zM32 582h1v1h-1zM36 582h1v1h-1zM32 583h1v1h-1zM36 583h1v1h-1zM33 584h3v1h-3zM21 629h3v1h-3zM20 630h1v1h-1zM24 630h1v1h-1zM24 631h1v1h-1zM24 632h1v1h-1zM22 633h2v1h-2zM24 634h1v1h-1zM24 635h1v1h-1zM20 636h1v1h-1zM24 636h1v1h-1zM21 637h3v1h-3zM27 629h3v1h-3zM26 630h1v1h-1zM30 630h1v1h-1zM26 631h1v1h-1zM30 631h1v1h-1zM26 632h1v1h-1zM30 632h1v1h-1zM26 633h1v1h-1zM30 633h1v1h-1zM26 634h1v1h-1zM30 634h1v1h-1zM26 635h1v1h-1zM30 635h1v1h-1zM26 636h1v1h-1zM30 636h1v1h-1zM27 637h3v1h-3zM33 629h3v1h-3zM32 630h1v1h-1zM36 630h1v1h-1zM32 631h1v1h-1zM36 631h1v1h-1zM32 632h1v1h-1zM36 632h1v1h-1zM32 633h1v1h-1zM36 633h1v1h-1zM32 634h1v1h-1zM36 634h1v1h-1zM32 635h1v1h-1zM36 635h1v1h-1zM32 636h1v1h-1zM36 636h1v1h-1zM33 637h3v1h-3zM21 681h3v1h-3zM20 682h1v1h-1zM24 682h1v1h-1zM24 683h1v1h-1zM24 684h1v1h-1zM23 685h1v1h-1zM22 686h1v1h-1zM21 687h1v1h-1zM20 688h1v1h-1zM20 689h5v1h-5zM26 681h5v1h-5zM26 682h1v1h-1zM26 683h1v1h-1zM26 684h4v1h-4zM26 685h1v1h-1zM30 685h1v1h-1zM30 686h1v1h-1zM30 687h1v1h-1zM26 688h1v1h-1zM30 688h1v1h-1zM27 689h3v1h-3zM33 681h3v1h-3zM32 682h1v1h-1zM36 682h1v1h-1zM32 683h1v1h-1zM36 683h1v1h-1zM32 684h1v1h-1zM36 684h1v1h-1zM32 685h1v1h-1zM36 685h1v1h-1zM32 686h1v1h-1zM36 686h1v1h-1zM32 687h1v1h-1zM36 687h1v1h-1zM32 688h1v1h-1zM36 688h1v1h-1zM33 689h3v1h-3zM21 734h3v1h-3zM20 735h1v1h-1zM24 735h1v1h-1zM24 736h1v1h-1zM24 737h1v1h-1zM23 738h1v1h-1zM22 739h1v1h-1zM21 740h1v1h-1zM20 741h1v1h-1zM20 742h5v1h-5zM27 734h3v1h-3zM26 735h1v1h-1zM30 735h1v1h-1zM26 736h1v1h-1zM30 736h1v1h-1zM26 737h1v1h-1zM30 737h1v1h-1zM26 738h1v1h-1zM30 738h1v1h-1zM26 739h1v1h-1zM30 739h1v1h-1zM26 740h1v1h-1zM30 740h1v1h-1zM26 741h1v1h-1zM30 741h1v1h-1zM27 742h3v1h-3zM33 734h3v1h-3zM32 735h1v1h-1zM36 735h1v1h-1zM32 736h1v1h-1zM36 736h1v1h-1zM32 737h1v1h-1zM36 737h1v1h-1zM32 738h1v1h-1zM36 738h1v1h-1zM32 739h1v1h-1zM36 739h1v1h-1zM32 740h1v1h-1zM36 740h1v1h-1zM32 741h1v1h-1zM36 741h1v1h-1zM33 742h3v1h-3zM22 786h1v1h-1zM20 787h3v1h-3zM22 788h1v1h-1zM22 789h1v1h-1zM22 790h1v1h-1zM22 791h1v1h-1zM22 792h1v1h-1zM22 793h1v1h-1zM22 794h1v1h-1zM26 786h5v1h-5zM26 787h1v1h-1zM26 788h1v1h-1zM26 789h4v1h-4zM26 790h1v1h-1zM30 790h1v1h-1zM30 791h1v1h-1zM30 792h1v1h-1zM26 793h1v1h-1zM30 793h1v1h-1zM27 794h3v1h-3zM33 786h3v1h-3zM32 787h1v1h-1zM36 787h1v1h-1zM32 788h1v1h-1zM36 788h1v1h-1zM32 789h1v1h-1zM36 789h1v1h-1zM32 790h1v1h-1zM36 790h1v1h-1zM32 791h1v1h-1zM36 791h1v1h-1zM32 792h1v1h-1zM36 792h1v1h-1zM32 793h1v1h-1zM36 793h1v1h-1zM33 794h3v1h-3zM22 839h1v1h-1zM20 840h3v1h-3zM22 841h1v1h-1zM22 842h1v1h-1zM22 843h1v1h-1zM22 844h1v1h-1zM22 845h1v1h-1zM22 846h1v1h-1zM22 847h1v1h-1zM27 839h3v1h-3zM26 840h1v1h-1zM30 840h1v1h-1zM26 841h1v1h-1zM30 841h1v1h-1zM26 842h1v1h-1zM30 842h1v1h-1zM26 843h1v1h-1zM30 843h1v1h-1zM26 844h1v1h-1zM30 844h1v1h-1zM26 845h1v1h-1zM30 845h1v1h-1zM26 846h1v1h-1zM30 846h1v1h-1zM27 847h3v1h-3zM33 839h3v1h-3zM32 840h1v1h-1zM36 840h1v1h-1zM32 841h1v1h-1zM36 841h1v1h-1zM32 842h1v1h-1zM36 842h1v1h-1zM32 843h1v1h-1zM36 843h1v1h-1zM32 844h1v1h-1zM36 844h1v1h-1zM32 845h1v1h-1zM36 845h1v1h-1zM32 846h1v1h-1zM36 846h1v1h-1zM33 847h3v1h-3zM26 891h5v1h-5zM26 892h1v1h-1zM26 893h1v1h-1zM26 894h4v1h-4zM26 895h1v1h-1zM30 895h1v1h-1zM30 896h1v1h-1zM30 897h1v1h-1zM26 898h1v1h-1zM30 898h1v1h-1zM27 899h3v1h-3zM33 891h3v1h-3zM32 892h1v1h-1zM36 892h1v1h-1zM32 893h1v1h-1zM36 893h1v1h-1zM32 894h1v1h-1zM36 894h1v1h-1zM32 895h1v1h-1zM36 895h1v1h-1zM32 896h1v1h-1zM36 896h1v1h-1zM32 897h1v1h-1zM36 897h1v1h-1zM32 898h1v1h-1zM36 898h1v1h-1zM33 899h3v1h-3zM33 944h3v1h-3zM32 945h1v1h-1zM36 945h1v1h-1zM32 946h1v1h-1zM36 946h1v1h-1zM32 947h1v1h-1zM36 947h1v1h-1zM32 948h1v1h-1zM36 948h1v1h-1zM32 949h1v1h-1zM36 949h1v1h-1zM32 950h1v1h-1zM36 950h1v1h-1zM32 951h1v1h-1zM36 951h1v1h-1zM33 952h3v1h-3z"/>
</svg>
</body></html>
